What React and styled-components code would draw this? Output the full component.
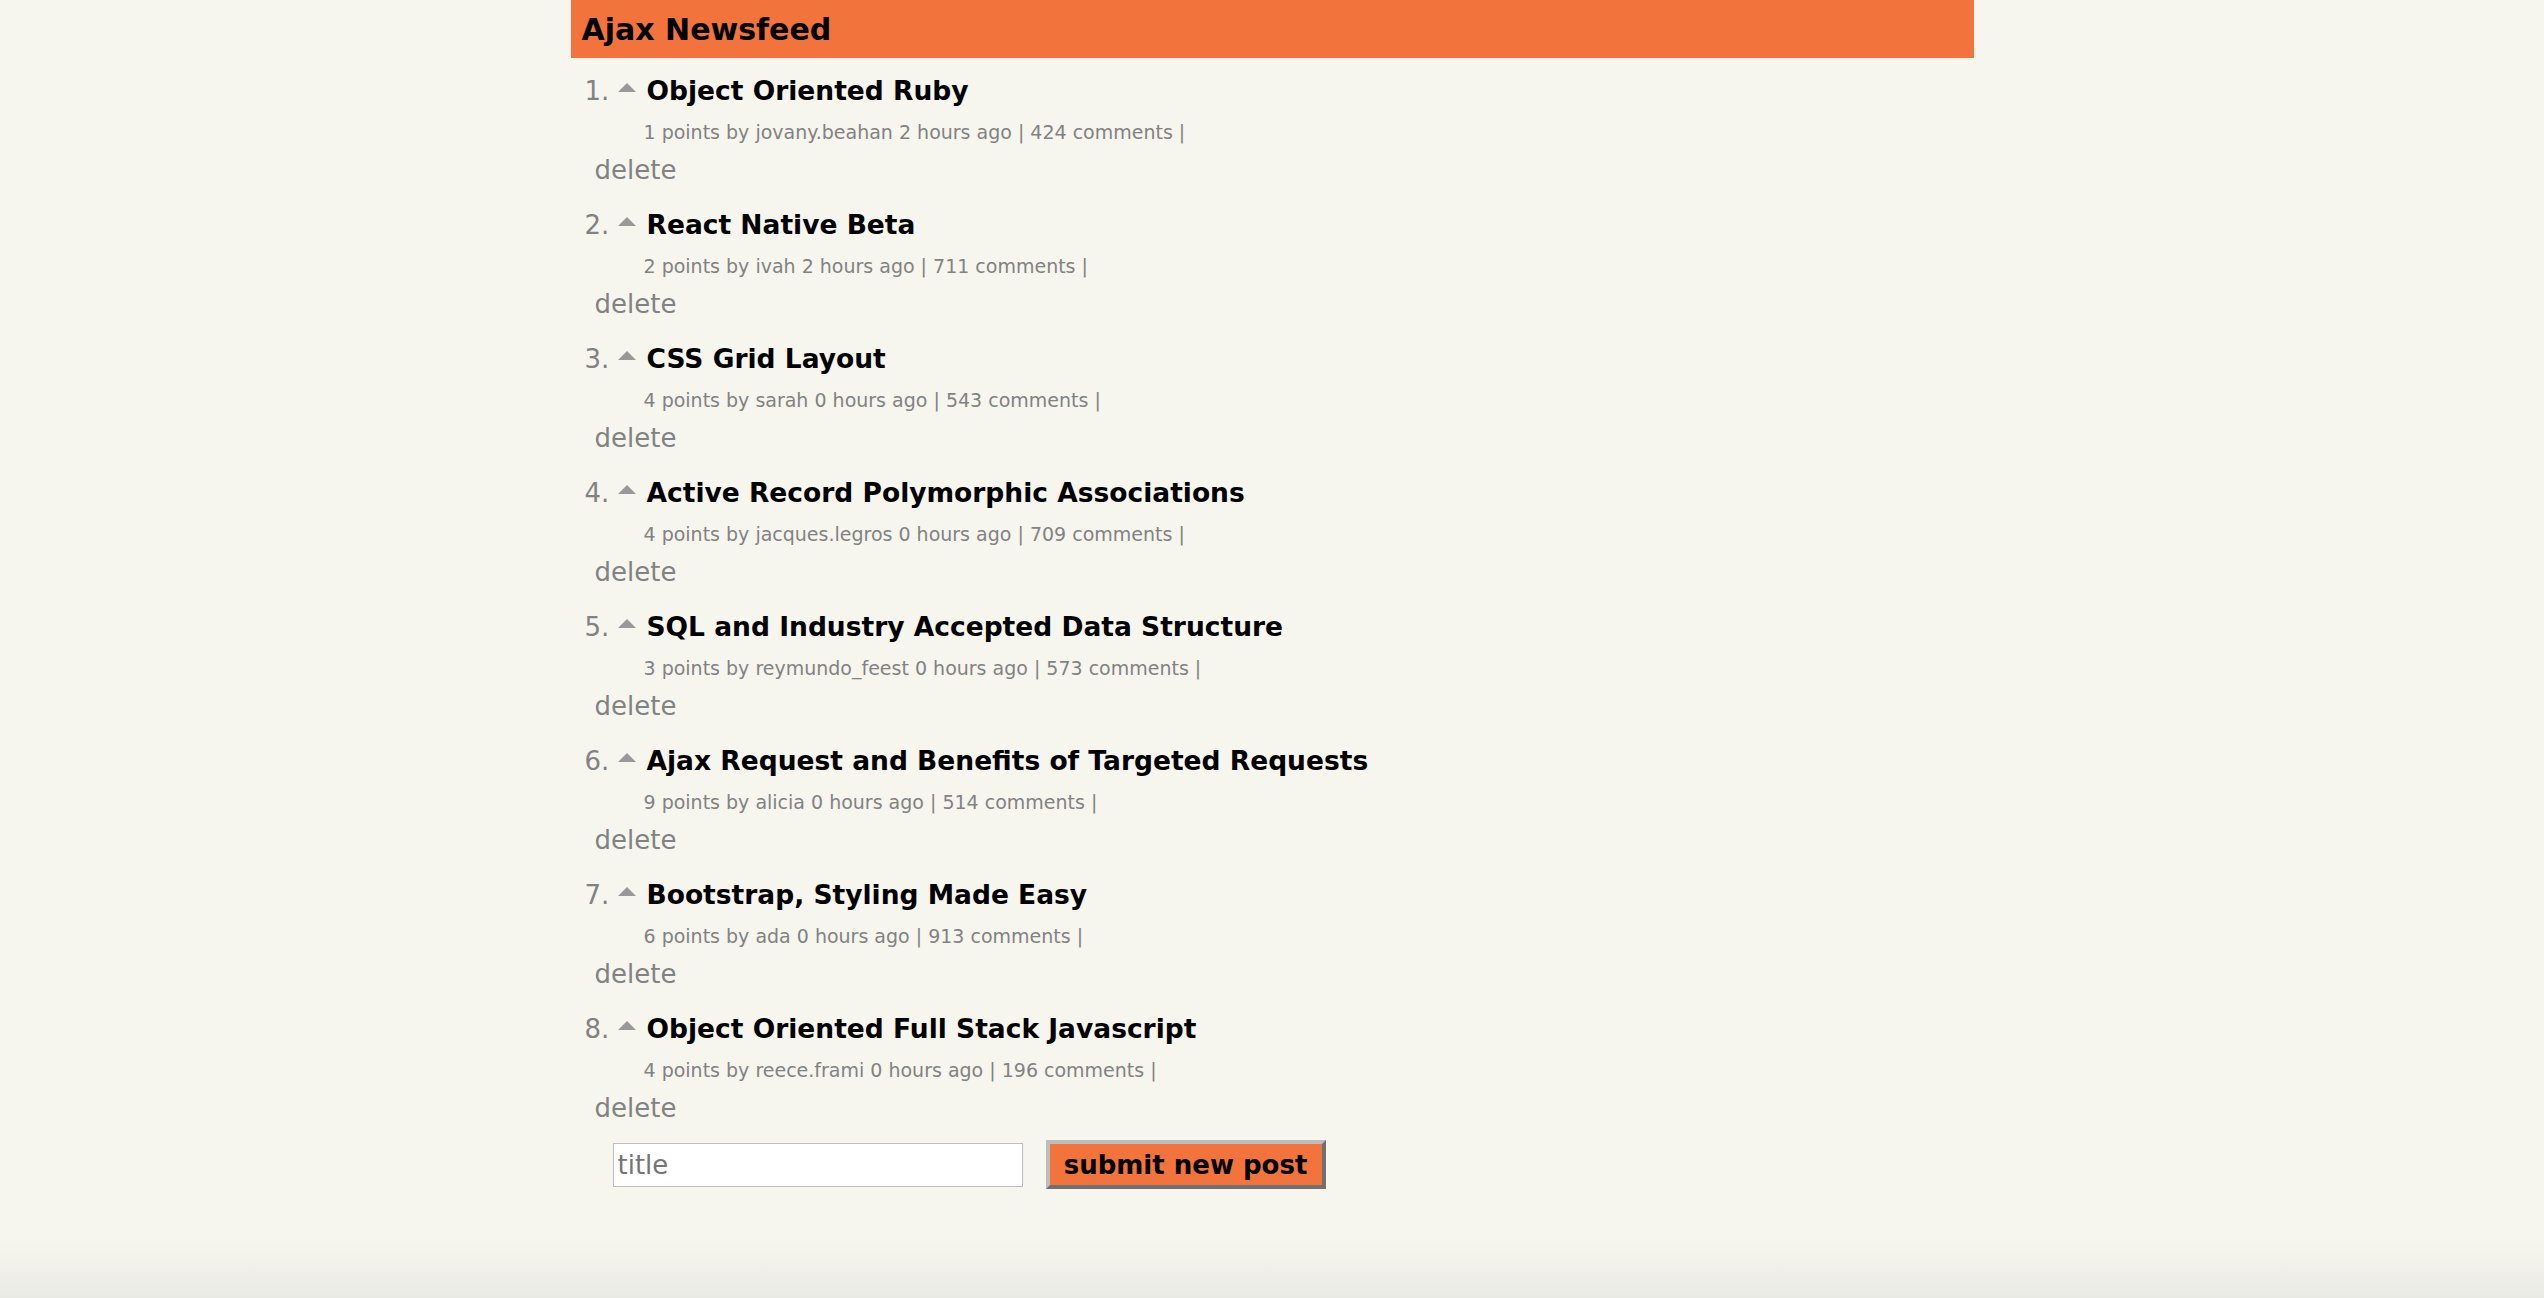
import React from 'react';
import styled, { createGlobalStyle } from 'styled-components';

const GlobalStyle = createGlobalStyle`
  html, body {
    margin: 0;
    padding: 0;
  }

  body {
    min-height: 100vh;
    background: linear-gradient(to bottom, #f6f6ef calc(100% - 60px), #eaeae4 100%);
    font-family: "DejaVu Sans", Verdana, sans-serif;
  }
`;

const Page = styled.div`
  width: 1403px;
  margin: 0 auto;
`;

const Header = styled.div`
  height: 58px;
  background: #f2733b;
  display: flex;
  align-items: center;
  padding: 0 11px;
  box-sizing: border-box;
`;

const Brand = styled.span`
  font-size: 30px;
  font-weight: bold;
  color: #000;
`;

const List = styled.div`
  padding-top: 15px;
`;

const Item = styled.div`
  & + & {
    margin-top: 20px;
  }
`;

const TitleLine = styled.div`
  display: flex;
  align-items: center;
  height: 36px;
`;

const Rank = styled.span`
  width: 33px;
  margin-left: 14px;
  font-size: 26px;
  line-height: 36px;
  color: #828282;
`;

const VoteArrow = styled.svg`
  width: 18px;
  height: 9px;
  margin: 0 11px 8px 0;
  flex: none;
`;

const Title = styled.a`
  font-size: 26.5px;
  font-weight: bold;
  line-height: 36px;
  color: #000;
  text-decoration: none;
`;

const Subtext = styled.div`
  margin-top: 11px;
  padding-left: 73px;
  font-size: 19px;
  line-height: 24px;
  color: #828282;
`;

const Delete = styled.a`
  display: block;
  margin-top: 9px;
  padding-left: 24px;
  font-size: 26px;
  line-height: 34px;
  color: #828282;
  text-decoration: none;
  cursor: pointer;
`;

const Form = styled.form`
  display: flex;
  align-items: center;
  gap: 23px;
  margin-top: 15px;
  padding-left: 42px;
`;

const TitleInput = styled.input`
  width: 410px;
  height: 44px;
  box-sizing: border-box;
  border: 1px solid #bdbdbd;
  background: #fff;
  padding: 0 4px;
  font-family: "DejaVu Sans", Verdana, sans-serif;
  font-size: 26px;
  color: #333;
  outline: none;

  &::placeholder {
    color: #757575;
  }
`;

const SubmitButton = styled.button`
  width: 280px;
  height: 49px;
  box-sizing: border-box;
  background: #f2733b;
  border: 4px solid;
  border-color: #bdbdbd #707070 #707070 #bdbdbd;
  padding: 0;
  font-family: "DejaVu Sans", Verdana, sans-serif;
  font-size: 26px;
  font-weight: bold;
  color: #000;
  cursor: pointer;
`;

const posts = [
  { title: 'Object Oriented Ruby', points: 1, author: 'jovany.beahan', hours: 2, comments: 424 },
  { title: 'React Native Beta', points: 2, author: 'ivah', hours: 2, comments: 711 },
  { title: 'CSS Grid Layout', points: 4, author: 'sarah', hours: 0, comments: 543 },
  { title: 'Active Record Polymorphic Associations', points: 4, author: 'jacques.legros', hours: 0, comments: 709 },
  { title: 'SQL and Industry Accepted Data Structure', points: 3, author: 'reymundo_feest', hours: 0, comments: 573 },
  { title: 'Ajax Request and Benefits of Targeted Requests', points: 9, author: 'alicia', hours: 0, comments: 514 },
  { title: 'Bootstrap, Styling Made Easy', points: 6, author: 'ada', hours: 0, comments: 913 },
  { title: 'Object Oriented Full Stack Javascript', points: 4, author: 'reece.frami', hours: 0, comments: 196 },
];

const UpArrow = () => (
  <VoteArrow viewBox="0 0 18 9">
    <polygon points="9,0 18,9 0,9" fill="#999" />
  </VoteArrow>
);

const App = () => {
  const handleSubmit = (e) => {
    e.preventDefault();
  };

  return (
    <>
      <GlobalStyle />
      <Page>
        <Header>
          <Brand>Ajax Newsfeed</Brand>
        </Header>
        <List>
          {posts.map((post, i) => (
            <Item key={post.title}>
              <TitleLine>
                <Rank>{i + 1}.</Rank>
                <UpArrow />
                <Title href="#">{post.title}</Title>
              </TitleLine>
              <Subtext>
                {post.points} points by {post.author} {post.hours} hours ago | {post.comments} comments |
              </Subtext>
              <Delete>delete</Delete>
            </Item>
          ))}
        </List>
        <Form onSubmit={handleSubmit}>
          <TitleInput placeholder="title" />
          <SubmitButton type="submit">submit new post</SubmitButton>
        </Form>
      </Page>
    </>
  );
};

export default App;
